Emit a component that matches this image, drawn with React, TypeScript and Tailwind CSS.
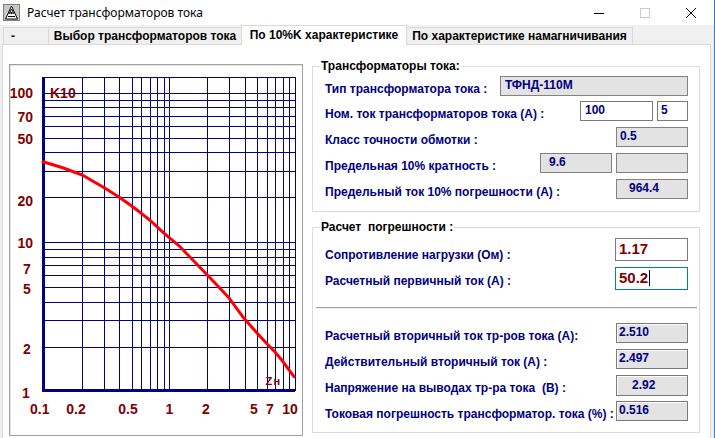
import React from "react"

const xPos = (v: number) => 169.3 + 125.5 * Math.log10(v)
const yPos = (v: number) => 391.5 - 149.3 * Math.log10(v)
const px = (n: number) => Math.round(n) + 0.5

const xGrid = [0.2, 0.3, 0.4, 0.5, 0.6, 0.7, 0.8, 0.9, 1, 2, 3, 4, 5, 6, 7, 8, 9, 10]
const yGrid = [2, 3, 4, 5, 6, 7, 8, 9, 10, 20, 30, 40, 50, 60, 70, 80, 90, 100]

const curve: [number, number][] = [
    [43, 161.7], [62, 167.5], [82.3, 175], [104.3, 187.7], [119.3, 197.3], [131.3, 205.7],
    [141.3, 213.3], [150.3, 220.5], [163.3, 232.7], [180, 246.7], [193.3, 260.5],
    [207.3, 275], [220, 288.3], [229.3, 298.3], [244, 318.3], [257, 333],
    [266.7, 343.5], [275, 352], [281.7, 360], [294, 376.7],
]

const yLabels = [
    { t: "100", x: 33, y: 98, a: "end" },
    { t: "70", x: 33, y: 121.5, a: "end" },
    { t: "50", x: 33, y: 144, a: "end" },
    { t: "20", x: 33, y: 206, a: "end" },
    { t: "10", x: 33, y: 248, a: "end" },
    { t: "7", x: 23, y: 274, a: "start" },
    { t: "5", x: 23, y: 294, a: "start" },
    { t: "2", x: 23, y: 354, a: "start" },
    { t: "1", x: 22, y: 398, a: "start" },
]

const xLabels = [
    { t: "0.1", x: 39.7 },
    { t: "0.2", x: 76 },
    { t: "0.5", x: 128 },
    { t: "1", x: 169.5 },
    { t: "2", x: 206 },
    { t: "5", x: 254 },
    { t: "7", x: 270 },
    { t: "10", x: 290 },
]

const AppIcon = () => (
    <svg width="17" height="17" viewBox="0 0 17 17" className="ml-[3px]">
        <rect x="0.5" y="0.5" width="16" height="16" fill="#c8c8c8" stroke="#808080" />
        <path d="M8.5 2 L14.5 15 L2.5 15 Z" fill="#ffffff" stroke="#000" strokeWidth="1" />
        <path d="M8.5 5 L6 10 M8.5 5 L11 10 M5 12.5 L12 12.5" stroke="#000" strokeWidth="1" />
        <rect x="7.5" y="8" width="2" height="2" fill="#000" />
    </svg>
)

const TitleBar = () => {
    return (
        <div className="h-[25px] bg-white flex items-center shrink-0">
            <AppIcon />
            <span className="ml-[7px] text-[12px] leading-[16px] text-black font-['Noto_Sans',sans-serif]">
                Расчет трансформаторов тока
            </span>
            <div className="ml-auto flex h-full">
                <div className="w-[46px] h-full flex items-center justify-center">
                    <svg width="10" height="10" viewBox="0 0 10 10"><path d="M0 5.5 H10" stroke="#000" strokeWidth="1" /></svg>
                </div>
                <div className="w-[46px] h-full flex items-center justify-center">
                    <svg width="10" height="10" viewBox="0 0 10 10"><rect x="0.5" y="0.5" width="9" height="9" fill="none" stroke="#cccccc" strokeWidth="1" /></svg>
                </div>
                <div className="w-[46px] h-full flex items-center justify-center">
                    <svg width="10" height="10" viewBox="0 0 10 10"><path d="M0 0 L10 10 M10 0 L0 10" stroke="#000" strokeWidth="1" /></svg>
                </div>
            </div>
        </div>
    )
}

const Tabs = () => {
    return (
        <div className="relative z-10 h-[19px] flex items-end pl-[3px] font-['Liberation_Sans',sans-serif] font-bold text-[12px] text-black">
            <div className="w-[45px] h-[17px] bg-[#f0f0f0] border-l border-t border-[#d9d9d9] flex items-center pl-[7px] leading-[14px]">-</div>
            <div className="w-[193px] h-[17px] bg-[#f0f0f0] border-l border-t border-[#d9d9d9] flex items-center justify-center leading-[14px]">Выбор трансформаторов тока</div>
            <div className="w-[166px] h-[20px] -mb-[1px] bg-white border-l border-t border-r border-[#d9d9d9] flex items-center justify-center leading-[14px] pb-[2px]">По 10%K характеристике</div>
            <div className="w-[226px] h-[17px] bg-[#f0f0f0] border-t border-r border-[#d9d9d9] flex items-center justify-center leading-[14px]">По характеристике намагничивания</div>
        </div>
    )
}

const Chart = () => {
    const pts = curve.map(([x, y]) => `${x},${y}`).join(" ")
    return (
        <div className="w-[294px] h-[372px] border border-[#a0a0a0] bg-white shrink-0 shadow-[inset_1px_1px_0_#e3e3e3]">
            <svg width="292" height="370" viewBox="10 65 292 370" className="block">
                {xGrid.map(v => (
                    <line key={"x" + v} x1={px(xPos(v))} x2={px(xPos(v))} y1={77} y2={391} stroke="#000080" strokeWidth="1" />
                ))}
                {yGrid.map(v => (
                    <line key={"y" + v} x1={42} x2={295} y1={px(yPos(v))} y2={px(yPos(v))} stroke="#000080" strokeWidth="1" />
                ))}
                <line x1={42} x2={295} y1={77.5} y2={77.5} stroke="#000080" strokeWidth="1" />
                <rect x={42} y={77} width={3} height={315} fill="#000080" />
                <rect x={42} y={389} width={253} height={3} fill="#000080" />
                <polyline points={pts} fill="none" stroke="#ff0000" strokeWidth="3" strokeLinejoin="round" strokeLinecap="round" />
                <g fontFamily="'Liberation Sans', sans-serif" fontWeight="bold" fontSize="14" fill="#800000">
                    {yLabels.map(l => (
                        <text key={l.t} x={l.x} y={l.y} textAnchor={l.a as "start" | "end"}>{l.t}</text>
                    ))}
                    <text x={50} y={98}>K10</text>
                    {xLabels.map(l => (
                        <text key={l.t} x={l.x} y={414} textAnchor="middle">{l.t}</text>
                    ))}
                    <text x={265.5} y={384.5} fontSize="11">Z</text>
                    <text x={273.5} y={384.5} fontSize="11">н</text>
                </g>
            </svg>
        </div>
    )
}

type FieldProps = {
    value?: string
    className: string
    caret?: boolean
}

const Field = ({ value, className, caret }: FieldProps) => (
    <div className={`shrink-0 flex items-center pb-[2px] font-bold whitespace-pre ${className}`}>
        {value}
        {caret && <span className="ml-[1px] w-[1px] h-[16px] bg-black" />}
    </div>
)

const Label = ({ text, className = "mt-[5px]" }: { text: string, className?: string }) => (
    <div className={`flex-1 min-w-0 whitespace-pre text-[12px] leading-[14px] font-bold text-[#000080] ${className}`}>{text}</div>
)

const Legend = ({ text }: { text: string }) => (
    <span className="absolute left-[7px] -top-[8px] bg-white px-[1px] text-[12px] leading-[14px] font-bold text-black whitespace-pre">{text}</span>
)

const small = "text-[12px] leading-[14px]"
const gray = `bg-[#e3e3e3] border border-[#828282] text-[#000080] ${small}`
const white = `bg-white border border-[#7a7a7a] text-[#000080] ${small}`

const TransformerGroup = () => {
    return (
        <div className="relative h-[146px] border border-[#dcdcdc] pl-[12px] pr-[11px] pt-[9px] flex flex-col gap-[6px]">
            <Legend text="Трансформаторы тока:" />
            <div className="flex items-center h-[20px]">
                <Label text="Тип трансформатора тока :" />
                <Field value="ТФНД-110М" className={`w-[188px] h-[20px] pl-[4px] ${gray}`} />
            </div>
            <div className="flex items-center h-[20px] -mt-[1px]">
                <Label text="Ном. ток трансформаторов тока (А) :" />
                <Field value="100" className={`w-[73px] h-[20px] pl-[4px] ${white}`} />
                <Field value="5" className={`ml-[4px] w-[31px] h-[20px] pl-[3px] ${white}`} />
            </div>
            <div className="flex items-center h-[20px]">
                <Label text="Класс точности обмотки :" />
                <Field value="0.5" className={`w-[72px] h-[20px] pl-[3px] ${gray}`} />
            </div>
            <div className="flex items-center h-[20px]">
                <Label text="Предельная 10% кратность :" />
                <Field value="9.6" className={`w-[72px] h-[20px] pl-[8px] ${gray}`} />
                <Field value="" className={`ml-[4px] w-[72px] h-[20px] ${gray}`} />
            </div>
            <div className="flex items-center h-[20px]">
                <Label text="Предельный ток 10% погрешности (А) :" />
                <Field value="964.4" className={`w-[72px] h-[20px] pl-[12px] ${gray}`} />
            </div>
        </div>
    )
}

const out = `bg-[#e3e3e3] border border-[#7a7a7a] shadow-[inset_1px_1px_0_#ffffff] text-[#000080] ${small}`

const ErrorGroup = () => {
    return (
        <div className="relative h-[206px] border border-[#dcdcdc] pt-[10px] flex flex-col">
            <Legend text="Расчет  погрешности :" />
            <div className="pl-[12px] pr-[11px] flex flex-col gap-[6px]">
                <div className="flex items-center h-[23px]">
                    <Label text="Сопротивление нагрузки (Ом) :" className="mt-[11px]" />
                    <Field value="1.17" className="w-[73px] h-[23px] pl-[3px] bg-white border border-[#7a7a7a] text-[#800000] text-[15px] leading-[17px]" />
                </div>
                <div className="flex items-center h-[23px]">
                    <Label text="Расчетный первичный ток (А) :" />
                    <Field value="50.2" caret className="w-[73px] h-[23px] pl-[3px] bg-white border border-[#0078d7] text-[#800000] text-[15px] leading-[17px]" />
                </div>
            </div>
            <div className="mt-[17px] ml-[3px] mr-[2px] border-t border-[#a0a0a0] border-b border-b-[#f0f0f0]" />
            <div className="mt-[14px] pl-[12px] pr-[11px] flex flex-col gap-[6px]">
                <div className="flex items-center h-[20px]">
                    <Label text="Расчетный вторичный ток тр-ров тока (А):" />
                    <Field value="2.510" className={`w-[72px] h-[20px] pl-[2px] ${out}`} />
                </div>
                <div className="flex items-center h-[20px]">
                    <Label text="Действительный вторичный ток (А) :" />
                    <Field value="2.497" className={`w-[72px] h-[20px] pl-[2px] ${out}`} />
                </div>
                <div className="flex items-center h-[21px]">
                    <Label text="Напряжение на выводах тр-ра тока  (В) :" />
                    <Field value="2.92" className={`w-[72px] h-[21px] pl-[15px] ${out}`} />
                </div>
                <div className="flex items-center h-[20px] -mt-[1px]">
                    <Label text="Токовая погрешность трансформатор. тока (%) :" />
                    <Field value="0.516" className={`w-[72px] h-[20px] pl-[2px] ${out}`} />
                </div>
            </div>
        </div>
    )
}

export default function App() {
    return (
        <div className="w-[715px] h-[438px] overflow-hidden bg-[#f0f0f0] flex flex-col border-r border-[#2b7fd4] font-['Liberation_Sans',sans-serif]">
            <TitleBar />
            <Tabs />
            <div className="flex-1 ml-[2px] mr-[3px] bg-white border-t border-l border-r border-[#d9d9d9] flex items-start">
                <div className="ml-[6px] mt-[19px]">
                    <Chart />
                </div>
                <div className="ml-[9px] mt-[21px] w-[388px] flex flex-col gap-[15px]">
                    <TransformerGroup />
                    <ErrorGroup />
                </div>
            </div>
        </div>
    )
}
